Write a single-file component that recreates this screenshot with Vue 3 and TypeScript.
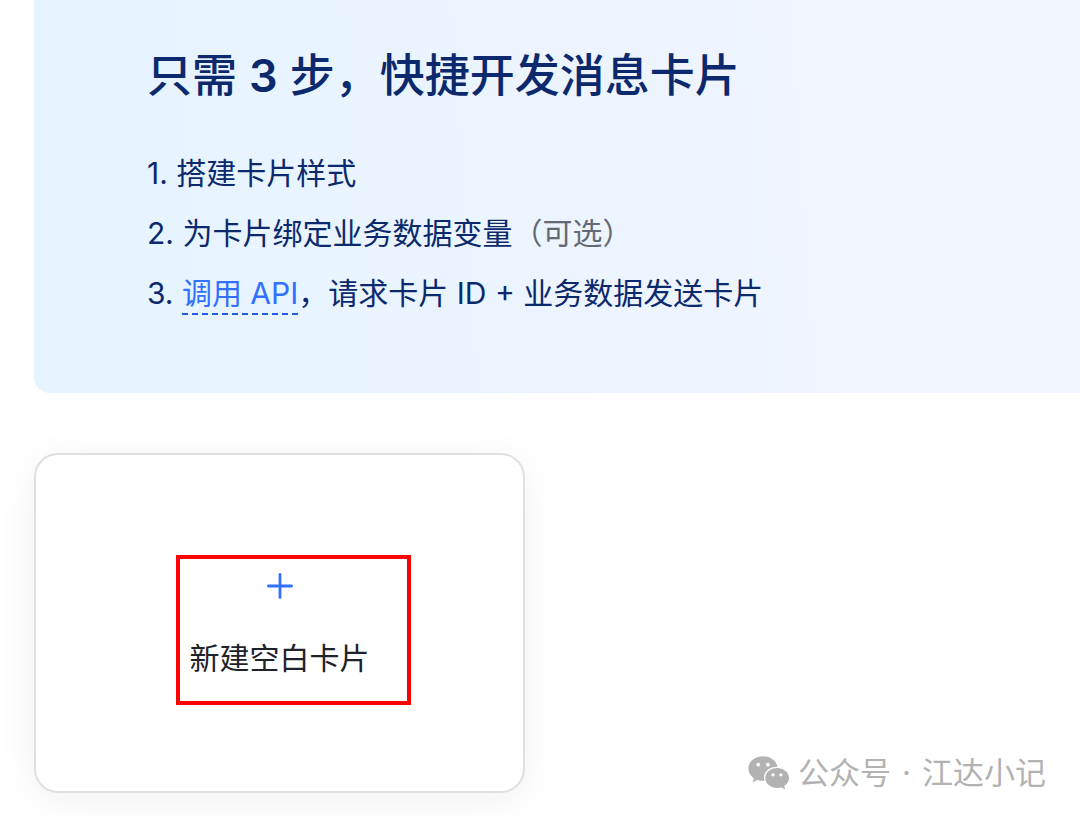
<script setup lang="ts">
interface Step {
  link?: string
  text: string
  note?: string
}

const steps: Step[] = [
  { text: '搭建卡片样式' },
  { text: '为卡片绑定业务数据变量', note: '（可选）' },
  { link: '调用 API', text: '，请求卡片 ID + 业务数据发送卡片' },
]
</script>

<template>
  <main class="page">
    <section class="banner">
      <h1 class="title">只需 <span class="count">3</span> 步，快捷开发消息卡片</h1>
      <ol class="steps">
        <li v-for="(step, i) in steps" :key="i">
          {{ i + 1 }}. <a v-if="step.link" href="#" class="link">{{ step.link }}</a>{{ step.text }}<span v-if="step.note" class="note">{{ step.note }}</span>
        </li>
      </ol>
    </section>

    <section class="cards">
      <button type="button" class="card">
        <svg class="plus" viewBox="0 0 26 26" aria-hidden="true">
          <path d="M13 1.4V24.6M1.4 13H24.6" fill="none" stroke="#3370ff" stroke-width="2.8" stroke-linecap="round" />
        </svg>
        <span class="label">新建空白卡片</span>
        <span class="highlight" aria-hidden="true"></span>
      </button>
    </section>

    <div class="watermark">
      <svg class="wechat" viewBox="0 0 42 34" aria-hidden="true">
        <path
          fill="#b2b2b2"
          d="M15 .3C6.900 .3 .4 5.700 .4 12.600C.4 16.500 2.500 20 5.900 22.300L4.600 26.300L9.500 23.900C11.200 24.500 13 24.800 15 24.800L16.600 24.700C16.200 23.600 16 22.500 16 21.400C16 15.300 21.800 10.700 28.900 10.700L29.500 10.750C28.400 4.800 22.400 .3 15 .3Z"
        />
        <path
          fill="#b2b2b2"
          d="M29 12C22.500 12 17.300 16.400 17.300 21.900C17.300 27.500 22.500 31.900 29 31.900C30.500 31.900 31.900 31.700 33.200 31.300L37.200 33.400L36.200 29.900C39.100 28 41 25.100 41 21.900C41 16.400 35.600 12 29 12Z"
        />
        <g fill="#fff">
          <circle cx="10.200" cy="8.700" r="1.900" />
          <circle cx="19.900" cy="8.700" r="1.900" />
          <circle cx="25" cy="18.800" r="1.600" />
          <circle cx="32.900" cy="18.800" r="1.600" />
        </g>
      </svg>
      <span class="source"><span>公众号</span><span>·</span><span>江达小记</span></span>
    </div>
  </main>
</template>

<style>
body {
  margin: 0;
  background: #fff;
}
</style>

<style scoped>
.page {
  position: relative;
  box-sizing: border-box;
  min-height: 100vh;
  padding: 0 0 23px 34px;
  font-family: Inter, "Noto Sans CJK SC", sans-serif;
  color: #0c296e;
}

.banner {
  padding: 44px 24px 70px 113px;
  border-bottom-left-radius: 16px;
  background: linear-gradient(86deg, #e5f4ff 0%, #eaf4ff 40%, #f1f5ff 80%, #f1f5ff 100%);
}

.title {
  margin: 0 0 35px;
  font-size: 45px;
  line-height: 64px;
  font-weight: 500;
}

.count {
  font-weight: 600;
}

.steps {
  margin: 0;
  padding: 0;
  list-style: none;
  font-size: 30px;
  line-height: 60px;
}

.link {
  padding-bottom: 2px;
  color: #3370ff;
  text-decoration: none;
  border-bottom: 2px dashed #245bdb;
}

.note {
  color: #646a73;
}

.cards {
  display: flex;
  padding-top: 60px;
}

.card {
  position: relative;
  flex: 0 1 491px;
  box-sizing: border-box;
  display: flex;
  flex-direction: column;
  align-items: center;
  gap: 37px;
  padding: 118px 20px 111px;
  border: 2px solid #dee0e3;
  border-radius: 24px;
  background: #fff;
  box-shadow: 0 8px 40px rgba(31, 35, 41, 0.06);
  font: inherit;
  color: #1f2329;
  cursor: pointer;
}

.plus {
  width: 26px;
  height: 26px;
}

.label {
  font-size: 30px;
  line-height: 44px;
}

.highlight {
  position: absolute;
  top: 100px;
  left: 140px;
  box-sizing: border-box;
  width: 235px;
  height: 150px;
  border: 4px solid #f00;
}

.watermark {
  position: absolute;
  right: 34px;
  bottom: 20px;
  display: flex;
  align-items: center;
  gap: 8px;
  font-size: 31px;
  line-height: 46px;
  color: #b2b2b2;
}

.source {
  display: flex;
  gap: 11px;
}

.wechat {
  width: 42px;
  height: 34px;
}
</style>
